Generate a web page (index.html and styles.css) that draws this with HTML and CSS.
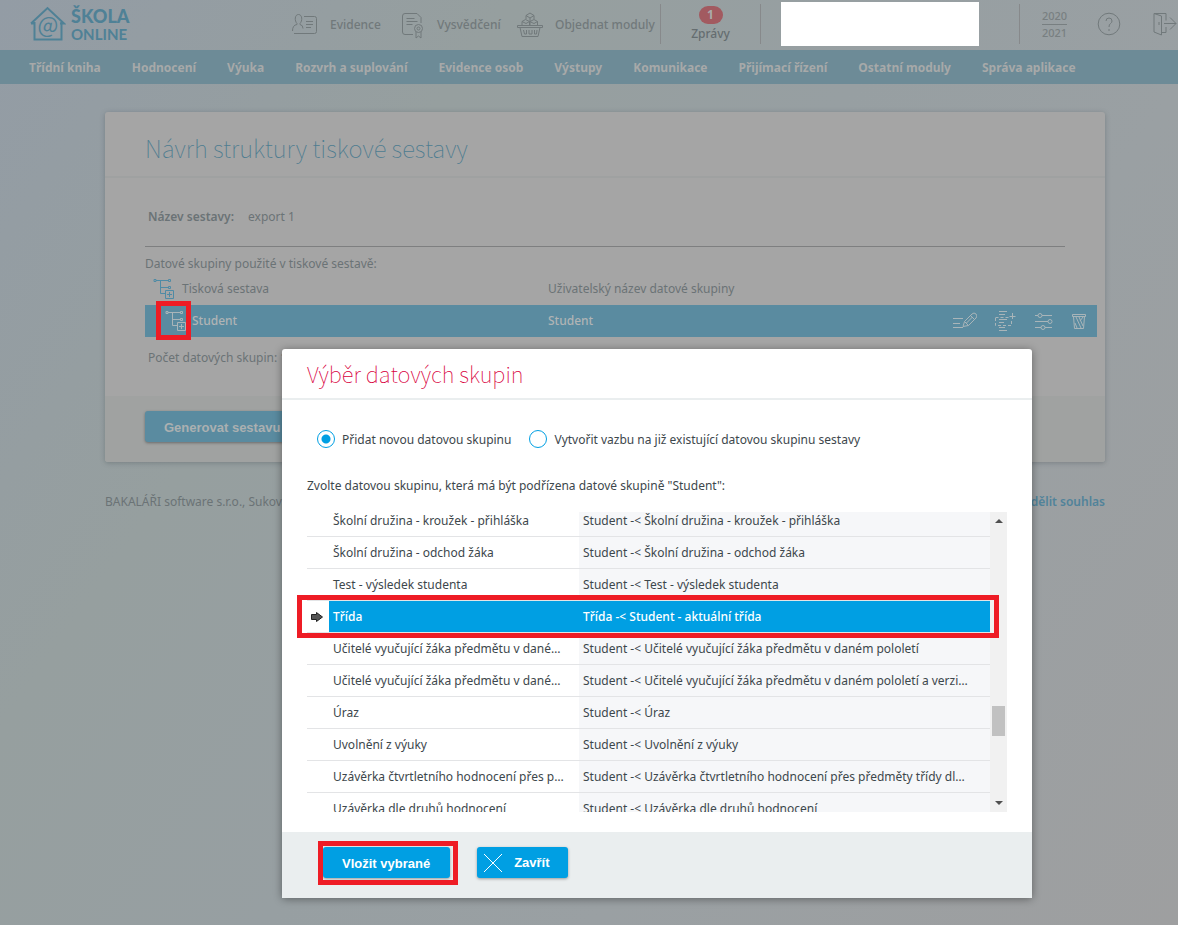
FILE: index.html
```
<!DOCTYPE html>
<html lang="cs">
<head>
<meta charset="utf-8">
<title>Škola Online</title>
<link rel="stylesheet" href="styles.css">
</head>
<body>
<header class="topbar">
  <a class="logo" href="#">
    <svg width="36" height="35" viewBox="0 0 36 35" fill="none" stroke="currentColor" stroke-width="2"><path d="M4.500 16v17.500h27V16M1 17.500L17.500 2 34 17.500h-4M1 17.500h4"/><text class="logo-at" x="18" y="27" text-anchor="middle">@</text></svg>
    <span class="logo-text"><b>ŠKOLA</b><span>ONLINE</span></span>
  </a>
  <nav class="tools">
    <a class="tool tool-people" href="#"><svg width="26" height="24" viewBox="0 0 26 24" fill="none" stroke="currentColor"><path d="M12 3.500h10.500q2 0 2 2v13q0 2-2 2H2M14 8.500h7M14 11.500h7M14 14.500h5M5 10.500C2.500 8 2.500 1.500 6.500 1.500S10.500 8 8 10.500v1q3 .5 3 4M5 10.500v1Q.500 12 .500 18"/></svg>Evidence</a>
    <a class="tool tool-report" href="#"><svg width="22" height="28" viewBox="0 0 22 28" fill="none" stroke="currentColor"><path d="M11 23.500H3q-2.500 0-2.500-2.500V5q0-2.500 2.500-2.500h12l4 4V12M4.500 7.500h8M4.500 10.500h11M4.500 13.500h6M14 21v6l2.500-2 2.500 2v-6"/><circle cx="16.500" cy="17.500" r="4"/><circle cx="16.500" cy="17.500" r="1.500"/></svg>Vysvědčení</a>
    <a class="tool tool-basket" href="#"><svg width="26" height="26" viewBox="0 0 26 26" fill="none" stroke="currentColor"><path d="M.500 13.500h25v2H.500zM3 15.500l2 9h16l2-9M6.500 18l1 4h2v-4M12 18v4h3v-4M17.500 18v4h2l.500-4M5 13V9.500l3.500-2 4 2V13M13 13V9.500l4-2 3.500 2V13M5 9.500l4 2 3.500-2 4.500 2 3.500-2M9 7V3.500l4-2.500 4 2.500V7M9 3.500L13 6l4-2.500M13 6v3"/></svg>Objednat moduly</a>
  </nav>
  <a class="messages" href="#"><span class="count">1</span><span>Zprávy</span></a>
  <div class="account"></div>
  <a class="year" href="#"><span>2020</span><span>2021</span></a>
  <a class="round-link" href="#" aria-label="Nápověda"><svg width="24" height="24" viewBox="0 0 24 24" fill="none" stroke="currentColor"><circle cx="12" cy="12" r="10.800"/><path d="M9 9q0-3 3-3t3 3q0 1.500-1.500 2.500-1.500 1-1.500 3.500M12 17v2"/></svg></a>
  <a class="exit" href="#" aria-label="Odhlásit"><svg width="24" height="24" viewBox="0 0 24 24" fill="none" stroke="currentColor"><path d="M1 1.500l7.500 2.500v19L1 20zM1 1.500h12v7M13 15v5.500H9M6 10v3M11 11.500h12M17 5.500l6 6-6 6"/></svg></a>
</header>
<nav class="menu">
  <a href="#">Třídní kniha</a><a href="#">Hodnocení</a><a href="#">Výuka</a><a href="#">Rozvrh a suplování</a><a href="#">Evidence osob</a><a href="#">Výstupy</a><a href="#">Komunikace</a><a href="#">Přijímací řízení</a><a href="#">Ostatní moduly</a><a href="#">Správa aplikace</a>
</nav>
<main class="page">
  <section class="card">
    <h1>Návrh struktury tiskové sestavy</h1>
    <div class="card-body">
      <div class="report-name"><b>Název sestavy:</b><span>export 1</span></div>
      <p class="groups-title">Datové skupiny použité v tiskové sestavě:</p>
      <div class="tree-row">
        <span class="tree-name"><svg width="22" height="22" viewBox="0 0 22 22" fill="none" stroke="currentColor"><path d="M3 2.500h12M7.500 2.500v13h5M7.500 9.500h8"/><path d="M1 1.500h2v2H1zM15.500 1.500h2v2h-2zM15.500 8.500h2v2h-2zM12.500 12.500h8v8h-8zM16.500 14v5M14 16.500h5"/></svg>Tisková sestava</span>
        <span class="tree-user">Uživatelský název datové skupiny</span>
      </div>
      <div class="tree-row selected">
        <span class="tree-name"><span class="marked"><svg width="22" height="22" viewBox="0 0 22 22" fill="none" stroke="currentColor"><path d="M3 2.500h12M7.500 2.500v13h5M7.500 9.500h8"/><path d="M1 1.500h2v2H1zM15.500 1.500h2v2h-2zM15.500 8.500h2v2h-2zM12.500 12.500h8v8h-8zM16.500 14v5M14 16.500h5"/></svg></span>Student</span>
        <span class="tree-user">Student</span>
        <span class="actions">
          <svg width="24" height="18" viewBox="0 0 24 18" fill="none" stroke="currentColor"><path d="M0 6.500h10M0 11.500h7M0 15.500h10M10 14.500l1.500-5L19 2q2-2 4 0t0 4l-7.500 7.500zM17.500 3.500l4 4M11.500 9.500l4 4M13.500 11l6-6"/></svg>
          <svg width="22" height="20" viewBox="0 0 22 20" fill="none" stroke="currentColor"><path d="M4 .500h8M4 3.500h6M4 16.500h6M4 19.500h8M4 8.500h8M4 11.500h5M17.500 2v6M14.500 5.500h6"/><path d="M.500 6.500h13M16.500 10v4.500H.500v-8" stroke-dasharray="3 2"/></svg>
          <svg width="18" height="18" viewBox="0 0 18 18" fill="none" stroke="currentColor"><path d="M0 3.500h3M7 3.500h10M0 9.500h13M0 15.500h6M10 15.500h7"/><circle cx="5" cy="3.500" r="2"/><circle cx="15" cy="9.500" r="2"/><circle cx="8" cy="15.500" r="2"/></svg>
          <svg width="16" height="17" viewBox="0 0 16 17" fill="none" stroke="currentColor"><path d="M1.500 1.500h13v2h-13zM2.500 3.500l1 12h9l1-12M5 4l5 11M8 4l4 9M12 4L9 8M4 10l2 5"/></svg>
        </span>
      </div>
      <p class="total">Počet datových skupin: 1</p>
    </div>
    <div class="card-foot"><button class="btn btn-dim" type="button">Generovat sestavu</button></div>
  </section>
  <footer class="legal"><span>BAKALÁŘI software s.r.o., Sukova třída 1548</span><a href="#">Udělit souhlas</a></footer>
</main>

<section class="dialog" role="dialog" aria-labelledby="dlg-title">
  <h2 id="dlg-title">Výběr datových skupin</h2>
  <div class="dialog-body">
    <div class="choices">
      <input type="radio" name="mode" id="m1" checked><label for="m1">Přidat novou datovou skupinu</label>
      <input type="radio" name="mode" id="m2"><label for="m2">Vytvořit vazbu na již existující datovou skupinu sestavy</label>
    </div>
    <p class="hint">Zvolte datovou skupinu, která má být podřízena datové skupině "Student":</p>
    <div class="grid-wrap">
      <div class="grid-view">
        <table class="grid">
          <colgroup><col class="c-mark"><col class="c-name"><col></colgroup>
          <tbody>
          <tr><td></td><td>Školní družina - kroužek - přihláška</td><td>Student -&lt; Školní družina - kroužek - přihláška</td></tr>
          <tr><td></td><td>Školní družina - odchod žáka</td><td>Student -&lt; Školní družina - odchod žáka</td></tr>
          <tr><td></td><td>Test - výsledek studenta</td><td>Student -&lt; Test - výsledek studenta</td></tr>
          <tr class="active"><td><svg width="12" height="10" viewBox="0 0 12 10"><path d="M.500 2.500h5v-2L11.500 5 5.500 9.500v-2h-5z" fill="#555" stroke="#222"/></svg></td><td>Třída</td><td>Třída -&lt; Student - aktuální třída</td></tr>
          <tr><td></td><td>Učitelé vyučující žáka předmětu v dané…</td><td>Student -&lt; Učitelé vyučující žáka předmětu v daném pololetí</td></tr>
          <tr><td></td><td>Učitelé vyučující žáka předmětu v dané…</td><td>Student -&lt; Učitelé vyučující žáka předmětu v daném pololetí a verzi…</td></tr>
          <tr><td></td><td>Úraz</td><td>Student -&lt; Úraz</td></tr>
          <tr><td></td><td>Uvolnění z výuky</td><td>Student -&lt; Uvolnění z výuky</td></tr>
          <tr><td></td><td>Uzávěrka čtvrtletního hodnocení přes p…</td><td>Student -&lt; Uzávěrka čtvrtletního hodnocení přes předměty třídy dl…</td></tr>
          <tr><td></td><td>Uzávěrka dle druhů hodnocení</td><td>Student -&lt; Uzávěrka dle druhů hodnocení</td></tr>
          </tbody>
        </table>
      </div>
      <div class="scroll"><i class="up"></i><i class="thumb"></i><i class="down"></i></div>
      <div class="frame row-frame"></div>
    </div>
  </div>
  <div class="dialog-foot">
    <span class="btn-wrap"><button class="btn" type="button">Vložit vybrané</button><span class="frame btn-frame"></span></span>
    <button class="btn btn-close" type="button"><svg width="18" height="18" viewBox="0 0 18 18" stroke="#fff" fill="none"><path d="M0 0l18 18M18 0L0 18"/></svg>Zavřít</button>
  </div>
</section>
</body>
</html>
```
FILE: styles.css
```
*, *::after { box-sizing: border-box; }
body {
  margin: 0;
  min-height: 100vh;
  position: relative;
  font: 12px/20px "Noto Sans", "Open Sans", sans-serif;
  color: #6b7376;
  background: linear-gradient(125deg, #939ca5 0%, #969f9f 28%, #979fa2 50%, #9aa0a3 68%, #9e9fa0 100%);
}
a { color: inherit; text-decoration: none; }
h1, h2, p { margin: 0; }
svg { flex: none; display: block; }

.topbar { display: flex; align-items: center; height: 50px; overflow: hidden; padding: 0 0 2px 30px; font-weight: 500; color: #71797b; }
.logo { display: flex; gap: 5px; width: 262px; flex: none; color: #4f8196; }
.logo-text { display: flex; flex-direction: column; font: 700 15px/16px Lato, "Noto Sans", sans-serif; }
.logo-text b { font-size: 18px; line-height: 20px; }
.logo-at { font: 22px "Noto Sans CJK SC", sans-serif; fill: currentColor; stroke: none; }
.tools { display: flex; flex: none; }
.tool { display: flex; align-items: center; gap: 12px; white-space: nowrap; height: 28px; padding-top: 2px; }
.tool-people { width: 110px; }
.tool-report { width: 115px; gap: 13px; }
.tool-basket { width: 143px; }
.messages { flex: none; width: 101px; height: 40px; border: solid #87898b; border-width: 0 1px; display: flex; flex-direction: column; align-items: center; line-height: 18px; color: #656d70; }
.count { width: 24px; height: 18px; border-radius: 9px; background: #a25a60; color: #aaa; font-weight: 700; text-align: center; line-height: 18px; margin: 2px 0 1px; }
.account { flex: none; width: 198px; height: 44px; margin: 0 40px 0 20px; background: #fff; }
.year { flex: none; width: 70px; height: 40px; border-left: 1px solid #87898b; display: flex; flex-direction: column; align-items: center; padding-top: 4px; font-size: 11px; line-height: 16px; color: #787f81; }
.year span:first-child { border-bottom: 1px solid #787f81; }
.round-link { margin-left: 8px; }
.exit { margin-left: 32px; }

.menu { display: flex; gap: 31px; height: 34px; padding: 2px 0 0 29px; align-items: center; background: #6d8b97; color: #a7a9a9; font-weight: 700; white-space: nowrap; overflow: hidden; }

.page { margin: 28px 73px 0 105px; }
.card { background: #a5a5a5; border-radius: 3px; box-shadow: 0 1px 5px rgba(60, 70, 75, .35); overflow: hidden; }
.card h1, .dialog h2 { font-family: "Noto Sans CJK SC", "Noto Sans", sans-serif; font-weight: 100; line-height: 34px; }
.card h1 { height: 66px; padding: 19px 40px 0; border-bottom: 2px solid #9fa1a1; font-size: 24px; color: #4d7c90; }
.card-body { padding: 29px 8px 28px 40px; }
.report-name { display: flex; gap: 14px; margin-right: 32px; padding: 0 3px; height: 40px; border-bottom: 1px solid #7e7f80; }
.report-name b { font-weight: 600; }
.groups-title { padding-top: 7px; height: 26px; }
.tree-row { display: flex; align-items: center; height: 32px; }
.tree-name { display: flex; align-items: center; gap: 7px; padding-left: 8px; width: 403px; }
.tree-row svg { color: #4f8ba5; }
.tree-row.selected { background: #5a8ba0; color: #b0b4b5; font-weight: 500; }
.selected svg { color: #a9b5b9; }
.selected .tree-name { padding-left: 20px; gap: 5px; }
.marked { position: relative; }
.marked::after { content: ""; position: absolute; left: -9px; top: -9px; width: 35px; height: 39px; border: 5px solid #ee1c25; }
.actions { display: flex; align-items: center; gap: 18px; margin-left: auto; padding-right: 10px; }
.total { padding: 11px 3px 0; }
.card-foot { background: #a0a2a1; padding: 15px 40px 20px; }
.legal { display: flex; justify-content: space-between; margin-top: 30px; }
.legal a { font-weight: 600; color: #51839a; }

.btn { height: 31px; border: 0; border-radius: 3px; background: #009fe3; color: #fff; font: bold 13px "Liberation Sans", sans-serif; padding: 1px 20px 0 19px; box-shadow: 0 1px 3px rgba(0, 0, 0, .35); display: flex; align-items: center; white-space: nowrap; }
.btn-dim { background: #5a8ba0; color: #abb0b1; }
.btn-close { gap: 12px; padding: 0 18px 0 7px; }

.dialog { position: absolute; left: 282px; top: 349px; width: 750px; background: #fff; border-radius: 3px; box-shadow: 0 1px 8px rgba(0, 0, 0, .4); color: #3d474c; }
.dialog h2 { height: 51px; padding: 7px 25px 0; border-bottom: 2px solid #eaeeef; font-size: 22px; color: #d8003c; }
.dialog-body { padding: 29px 25px 20px; }
.choices { display: flex; align-items: center; padding-left: 10px; height: 20px; }
.choices input { appearance: none; width: 18px; height: 18px; margin: 0 7px 0 0; border: 1px solid #009fe3; border-radius: 50%; }
.choices input:checked { background: radial-gradient(circle, #009fe3 0 4px, transparent 5px); }
.choices label { margin-right: 18px; padding-top: 2px; }
.hint { padding-top: 27px; margin-bottom: 16px; }
.grid-wrap { position: relative; display: flex; height: 300px; }
.grid-view { flex: 1; min-width: 0; overflow: hidden; }
.grid { width: 100%; margin-top: -7px; table-layout: fixed; border-collapse: separate; border-spacing: 0; }
.c-mark { width: 22px; }
.c-name { width: 250px; }
.grid td { height: 32px; padding: 0 4px; border-bottom: 1px solid #e3e4e6; white-space: nowrap; overflow: hidden; text-overflow: ellipsis; }
.grid td:last-child { background: #f6f7f9; }
.grid .active td + td { background: #009fe3; color: #fff; font-weight: 500; }
.scroll { width: 17px; background: #f1f1f1; display: flex; flex-direction: column; align-items: center; padding: 7px 0; }
.up, .down { border: 4px solid transparent; }
.up { border-top: 0; border-bottom-color: #505050; }
.down { border-bottom: 0; border-top-color: #505050; margin-top: auto; }
.thumb { width: 13px; height: 30px; background: #c1c1c1; margin-top: 183px; }
.frame { position: absolute; border: 5px solid #ee1c25; pointer-events: none; }
.row-frame { left: -10px; right: 8px; top: 83px; height: 43px; }
.dialog-foot { display: flex; gap: 27px; padding: 15px 41px 20px; background: #eaeeef; }
.btn-wrap { position: relative; }
.btn-frame { left: -5px; right: -8px; top: -6px; bottom: -7px; }
```
